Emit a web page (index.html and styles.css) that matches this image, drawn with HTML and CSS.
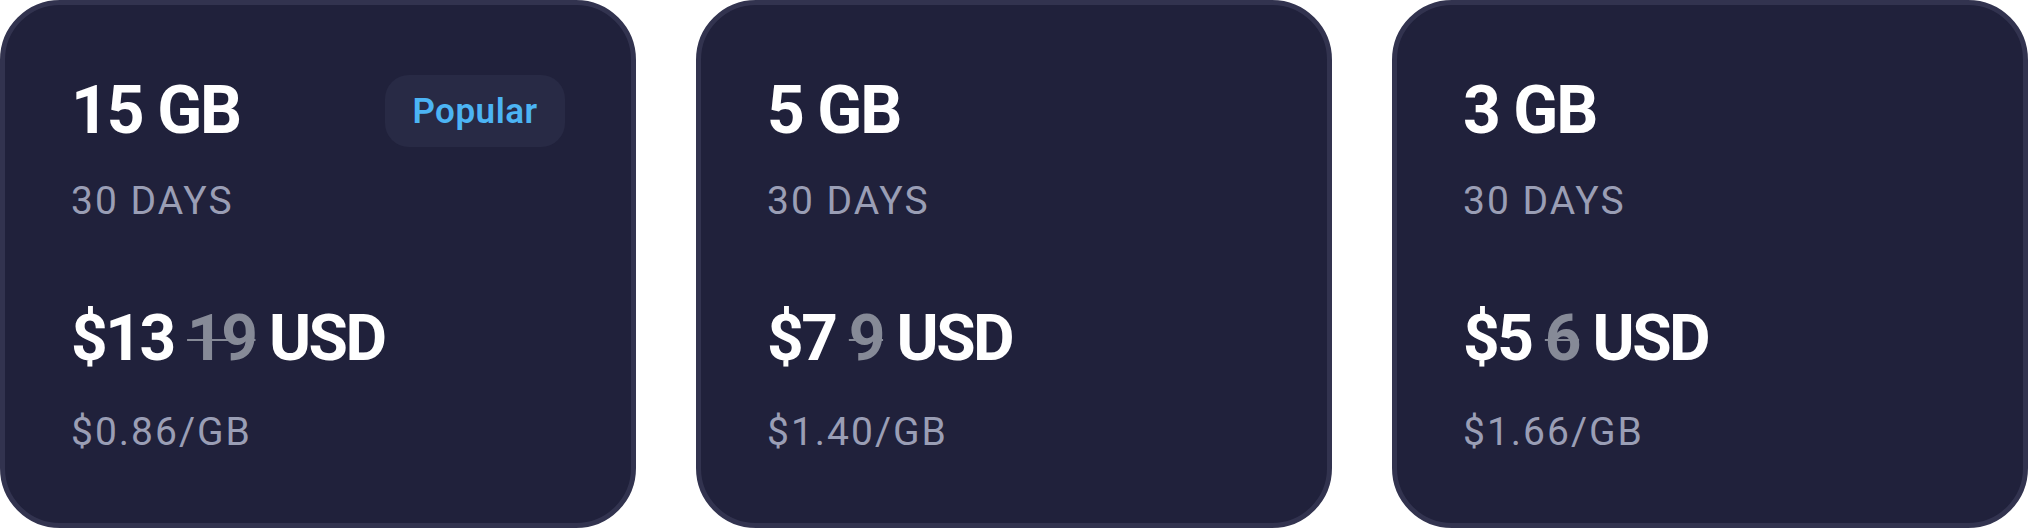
FILE: index.html
```html
<!DOCTYPE html>
<html lang="en">
<head>
<meta charset="utf-8">
<title>Data plans</title>
<link rel="stylesheet" href="styles.css">
</head>
<body>
<div class="plans">
  <div class="card">
    <div class="top">
      <div class="size">15 GB</div>
      <div class="badge">Popular</div>
    </div>
    <div class="days">30 DAYS</div>
    <div class="price">$13 <s class="old">19</s> USD</div>
    <div class="per">$0.86/GB</div>
  </div>
  <div class="card">
    <div class="top">
      <div class="size">5 GB</div>
    </div>
    <div class="days">30 DAYS</div>
    <div class="price">$7 <s class="old">9</s> USD</div>
    <div class="per">$1.40/GB</div>
  </div>
  <div class="card">
    <div class="top">
      <div class="size">3 GB</div>
    </div>
    <div class="days">30 DAYS</div>
    <div class="price">$5 <s class="old">6</s> USD</div>
    <div class="per">$1.66/GB</div>
  </div>
</div>
</body>
</html>
```
FILE: styles.css
```css
html, body {
  margin: 0;
  padding: 0;
  background: #ffffff;
}
body {
  font-family: Roboto, "Noto Sans", sans-serif;
}
.plans {
  display: grid;
  grid-template-columns: repeat(3, 636px);
  column-gap: 60px;
  height: 528px;
}
.card {
  box-sizing: border-box;
  height: 528px;
  background: #20213b;
  border: 5px solid #32334f;
  border-radius: 60px;
  padding: 70px 66px 0 66px;
  display: flex;
  flex-direction: column;
}
.top {
  display: flex;
  justify-content: space-between;
  align-items: center;
  height: 72px;
}
.size {
  font-size: 66px;
  line-height: 66px;
  font-weight: 700;
  color: #ffffff;
  letter-spacing: -2px;
}
.badge {
  width: 180px;
  height: 72px;
  box-sizing: border-box;
  border-radius: 24px;
  background: #282a45;
  color: #4cb4f4;
  font-size: 35px;
  font-weight: 600;
  display: flex;
  align-items: center;
  justify-content: center;
  letter-spacing: 0.5px;
}
.days {
  margin-top: 35px;
  font-size: 39px;
  line-height: 39px;
  color: #9a9eb5;
  letter-spacing: 2px;
}
.price {
  margin-top: 85px;
  font-size: 64px;
  line-height: 66px;
  font-weight: 700;
  color: #ffffff;
  letter-spacing: -2.5px;
}
.old {
  color: #868a97;
  text-decoration-thickness: 2px;
}
.per {
  margin-top: 41px;
  font-size: 39px;
  line-height: 39px;
  color: #9a9eb5;
  letter-spacing: 2px;
}
```
